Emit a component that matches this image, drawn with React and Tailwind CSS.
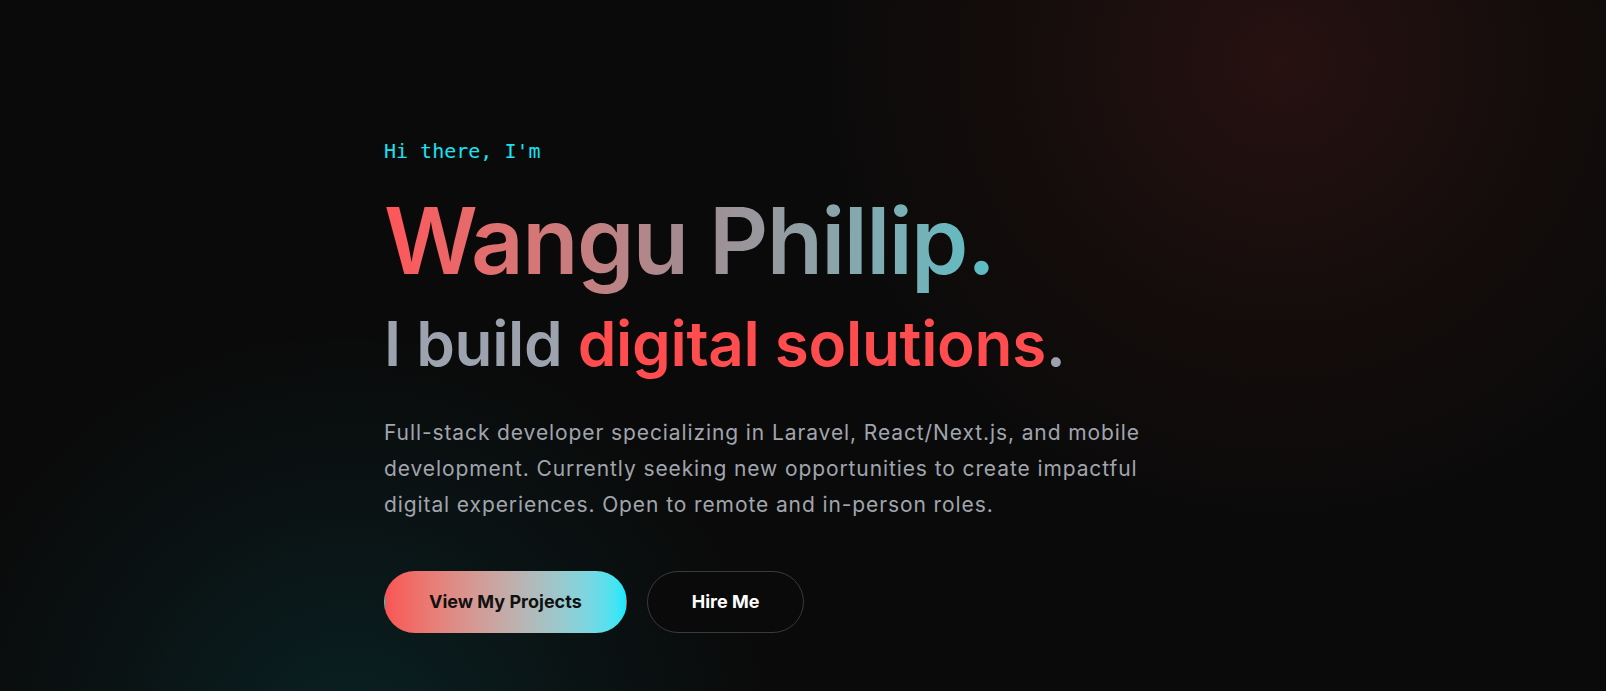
import React from "react";

const sans = { fontFamily: "Inter, 'Noto Sans', sans-serif" };
const mono = { fontFamily: "'DejaVu Sans Mono', 'Liberation Mono', monospace" };

const Hero = () => {
  return (
    <section className="relative min-h-[691px] w-full overflow-hidden bg-[#0a0a0a]" style={sans}>
      {/* background glows */}
      <div className="pointer-events-none absolute -top-[420px] left-[800px] h-[960px] w-[960px] rounded-full bg-[radial-gradient(circle,rgba(40,18,17,0.95)_0%,rgba(30,15,14,0.6)_35%,rgba(10,10,10,0)_70%)]" />
      <div className="pointer-events-none absolute top-[340px] -left-[90px] h-[820px] w-[880px] rounded-full bg-[radial-gradient(circle,rgba(10,40,42,0.8)_0%,rgba(10,30,32,0.45)_40%,rgba(10,10,10,0)_70%)]" />

      <div className="relative pl-[384px] pt-[137px]">
        <p className="text-xl leading-7 text-[#19e3f2]" style={mono}>
          Hi there, I'm
        </p>

        <h1 className="mt-[30px] text-[92px] font-semibold leading-none tracking-[-0.018em]">
          <span className="bg-gradient-to-r from-[#ff5459] via-[#a28c92] to-[#5bbec6] bg-clip-text text-transparent">
            Wangu Phillip.
          </span>
        </h1>

        <h2 className="mt-[26px] text-[62px] font-semibold leading-none tracking-[-0.005em] text-[#9ca3af]">
          I build <span className="text-[#ff4d4f]">digital solutions</span>.
        </h2>

        <p className="mt-[40px] max-w-[790px] text-[21px] leading-[36px] tracking-[0.9px] text-[#a1a5ad]">
          Full-stack developer specializing in Laravel, React/Next.js, and mobile development. Currently
          seeking new opportunities to create impactful digital experiences. Open to remote and in-person roles.
        </p>

        <div className="mt-[48px] flex items-center gap-5">
          <button className="rounded-full border border-transparent bg-linear-to-r from-[#f95454] to-[#0ae9fa] px-11 py-4 text-lg font-bold leading-7 text-[#111]">
            View My Projects
          </button>
          <button className="rounded-full border border-[#3a3a3a] bg-[#0a0a0a] px-11 py-4 text-lg font-bold leading-7 text-white">
            Hire Me
          </button>
        </div>
      </div>
    </section>
  );
};

export default function App() {
  return <Hero />;
}
